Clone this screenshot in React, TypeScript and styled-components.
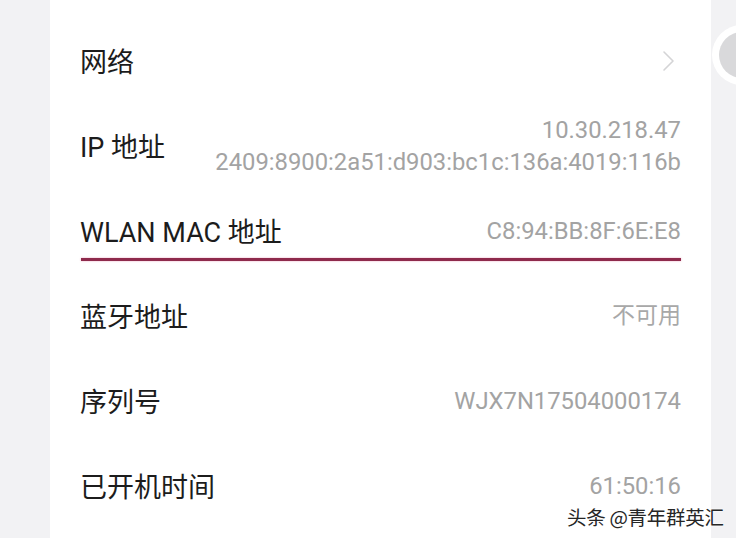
import React from "react";
import styled, { createGlobalStyle } from "styled-components";

const Global = createGlobalStyle`
  html, body { margin: 0; padding: 0; background: #f2f2f4; }
  body { width: 736px; height: 538px; overflow: hidden; }
  #root { width: 736px; height: 538px; }
`;

const Page = styled.div`
  position: relative;
  display: flex;
  width: 736px;
  height: 538px;
  background: #f2f2f4;
  overflow: hidden;
`;

const Gutter = styled.div<{ $w?: number }>`
  flex: ${(p) => (p.$w ? `0 0 ${p.$w}px` : "1")};
  background: #f2f2f4;
`;

const Card = styled.div`
  flex: 0 0 661px;
  background: #ffffff;
  padding: 18px 30px 0 30px;
  box-sizing: border-box;
  display: flex;
  flex-direction: column;
`;

const Row = styled.div<{ $underline?: boolean }>`
  position: relative;
  height: 85px;
  display: flex;
  align-items: center;
  justify-content: space-between;
  ${(p) =>
    p.$underline &&
    `&::after {
      content: "";
      position: absolute;
      left: 1px;
      right: 0;
      top: 70px;
      height: 3px;
      background: #8e2a4c;
      box-shadow: 0 0 2px rgba(230, 120, 160, 0.7);
    }`}
`;

const Label = styled.div`
  font-family: "Roboto", "Noto Sans CJK SC", sans-serif;
  font-size: 27px;
  color: #1c1c1c;
  white-space: nowrap;
`;

const Values = styled.div`
  display: flex;
  flex-direction: column;
  align-items: flex-end;
`;

const Value = styled.div`
  font-family: "Roboto", "Noto Sans CJK SC", sans-serif;
  font-size: 23.8px;
  line-height: 32px;
  color: #a3a3a3;
  white-space: nowrap;
`;

const ValueCJK = styled(Value)`
  font-size: 23px;
  color: #a8a8a8;
`;

const Chevron = styled.svg`
  width: 14px;
  height: 22px;
  margin-right: 5px;
`;

const FloatButton = styled.div`
  position: absolute;
  left: 712px;
  top: 25px;
  width: 60px;
  height: 60px;
  border-radius: 50%;
  background: #ffffff;
  display: flex;
  align-items: center;
  justify-content: center;
`;

const FloatInner = styled.div`
  width: 46px;
  height: 46px;
  border-radius: 50%;
  background: #d9d9db;
`;

const Watermark = styled.div`
  position: absolute;
  left: 567px;
  top: 502px;
  font-family: "Noto Sans CJK SC", sans-serif;
  font-size: 19.5px;
  font-weight: 400;
  color: #262626;
  letter-spacing: -0.3px;
  text-shadow: 0 0 2px #fff, 0 0 2px #fff;
  white-space: nowrap;
`;

export default function App() {
  return (
    <>
      <Global />
      <Page>
        <Gutter $w={50} />
        <Card>
          <Row>
            <Label>网络</Label>
            <Chevron viewBox="0 0 14 22">
              <path d="M2 2 L11 11 L2 20" fill="none" stroke="#d4d4d6" strokeWidth="1.6" strokeLinecap="round" strokeLinejoin="round" />
            </Chevron>
          </Row>
          <Row>
            <Label>IP 地址</Label>
            <Values>
              <Value>10.30.218.47</Value>
              <Value>2409:8900:2a51:d903:bc1c:136a:4019:116b</Value>
            </Values>
          </Row>
          <Row $underline>
            <Label>WLAN MAC 地址</Label>
            <Value>C8:94:BB:8F:6E:E8</Value>
          </Row>
          <Row>
            <Label>蓝牙地址</Label>
            <ValueCJK>不可用</ValueCJK>
          </Row>
          <Row>
            <Label>序列号</Label>
            <Value>WJX7N17504000174</Value>
          </Row>
          <Row>
            <Label>已开机时间</Label>
            <Value>61:50:16</Value>
          </Row>
        </Card>
        <Gutter />
        <FloatButton>
          <FloatInner />
        </FloatButton>
        <Watermark>头条 @青年群英汇</Watermark>
      </Page>
    </>
  );
}
